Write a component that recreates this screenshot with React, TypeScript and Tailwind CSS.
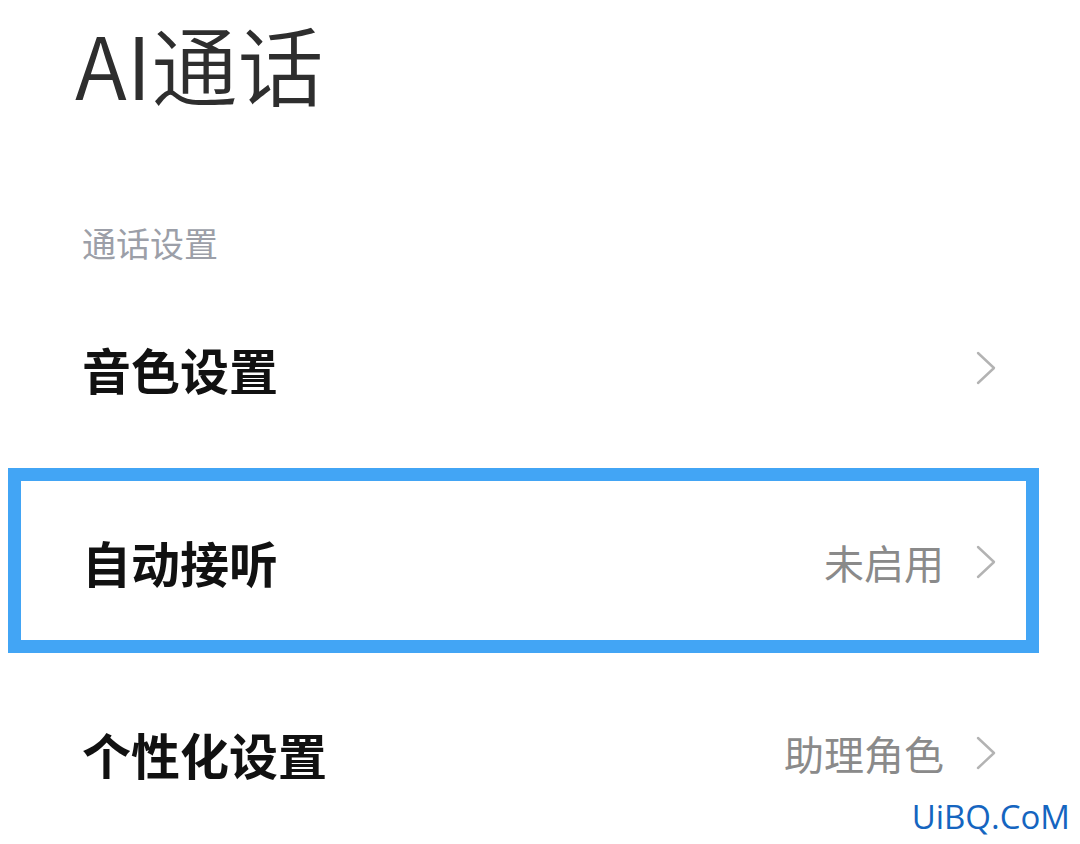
import React from "react";

const font = { fontFamily: '"Noto Sans CJK SC", "Noto Sans", sans-serif' };

function Chevron() {
  return (
    <svg width="20" height="34" viewBox="0 0 20 34" fill="none" className="shrink-0">
      <polyline points="2,2 18,17 2,32" stroke="#b3b3b3" strokeWidth="2.4" strokeLinecap="round" strokeLinejoin="round" />
    </svg>
  );
}

function Row({ label, value }: { label: string; value?: string }) {
  return (
    <div className="flex items-center justify-between w-full">
      <span className="text-[49px] font-bold text-[#111] leading-none">{label}</span>
      <div className="flex items-center gap-[32px]">
        {value && <span className="text-[40px] text-[#8a8a8a] leading-none">{value}</span>}
        <Chevron />
      </div>
    </div>
  );
}

export default function App() {
  return (
    <div className="relative w-[1080px] h-[844px] bg-white overflow-hidden" style={font}>
      <h1 className="pl-[75px] text-[86px] leading-[125px] font-[350] text-[#2e2e2e]">AI通话</h1>

      <div className="mt-[98px] pl-[82px] text-[34px] leading-[40px] text-[#9c9fa8]">通话设置</div>

      <div className="mt-[45px] h-[120px] flex items-center pl-[82px] pr-[84px]">
        <Row label="音色设置" />
      </div>

      <div className="mt-[40px] ml-[8px] w-[1031px] h-[185px] border-[13px] border-[#42a5f5] flex items-center pt-[2px] pl-[61px] pr-[30px]">
        <Row label="自动接听" value="未启用" />
      </div>

      <div className="mt-[40px] h-[120px] flex items-center pl-[82px] pr-[84px]">
        <Row label="个性化设置" value="助理角色" />
      </div>

      <div className="absolute right-[10px] bottom-[11px] text-[33px] leading-none text-[#1565c0]" style={{ fontFamily: '"Open Sans", sans-serif' }}>
        UiBQ.CoM
      </div>
    </div>
  );
}
